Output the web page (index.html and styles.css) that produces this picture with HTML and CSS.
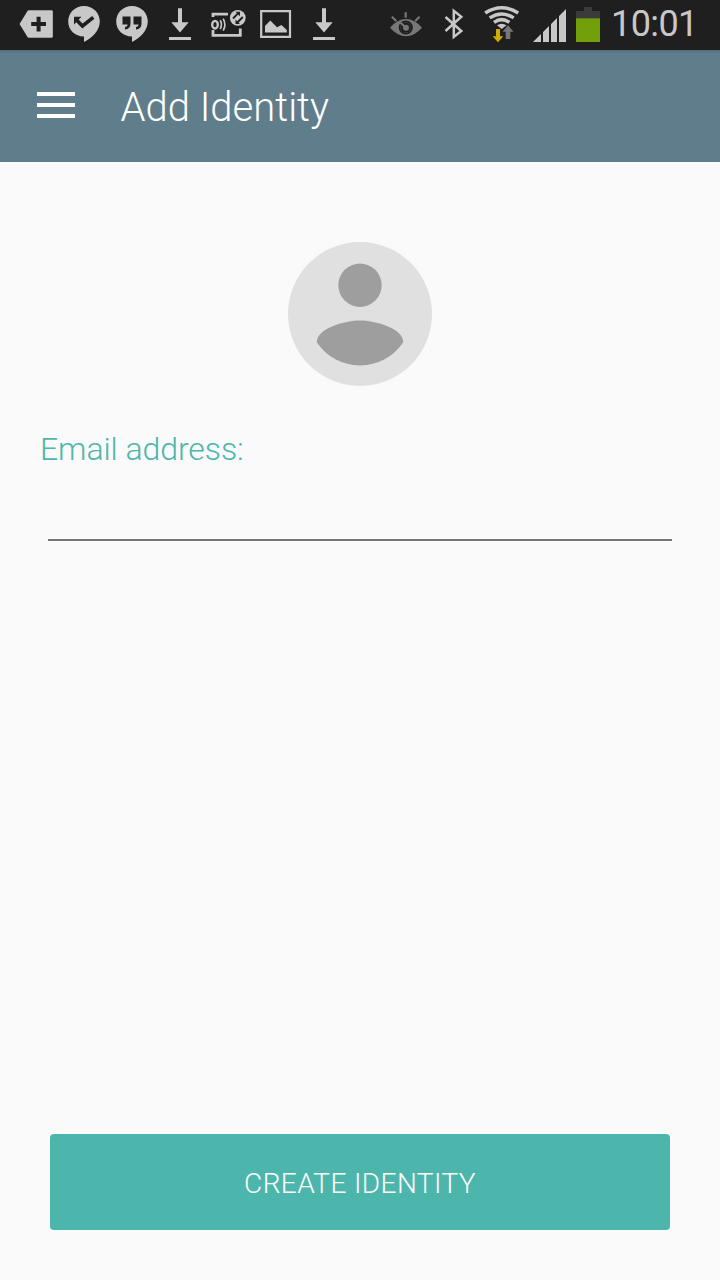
FILE: index.html
```html
<!DOCTYPE html>
<html lang="en">
<head>
<meta charset="utf-8">
<title>Add Identity</title>
<link rel="stylesheet" href="styles.css">
</head>
<body>
<div class="screen">
  <div class="status-bar">
    <div class="notifications">
      <svg class="status-icon" viewBox="12 0 48 50"><path fill="#c8c8c8" d="M19.500 24L27.500 11Q28 10.300 29 10.300H51.500Q52.800 10.300 52.800 11.500V36.500Q52.800 37.700 51.500 37.700H29Q28 37.700 27.500 37z"/><path fill="none" stroke="#1f1f1f" stroke-width="4" d="M31.200 24H46M38.600 16.800V31.600"/></svg>
      <svg class="status-icon" viewBox="60 0 48 50"><path fill="#c8c8c8" d="M84 6C75 6 68.200 13 68.200 21.500C68.200 30 75 36.500 84 36.500V42C92.500 37.500 99.800 30.500 99.800 21.500C99.800 13 93 6 84 6z"/><path fill="none" stroke="#1f1f1f" stroke-width="3.600" d="M76 19.500L82.500 26L93.300 17.300"/><path fill="#1f1f1f" d="M74 16.700H81.500L74 24.500z"/></svg>
      <svg class="status-icon" viewBox="108 0 48 50"><path fill="#c8c8c8" d="M132 6C123 6 116.200 13 116.200 21.500C116.200 30 123 36.500 132 36.500V42C140.500 37.500 147.800 30.500 147.800 21.500C147.800 13 141 6 132 6z"/><path fill="#1f1f1f" d="M122.500 16.500H130.500V23.500Q130.500 29 125 29.500V27Q127.700 26.500 127.700 24.500H122.500zM133.500 16.500H141.500V23.500Q141.500 29 136 29.500V27Q138.700 26.500 138.700 24.500H133.500z"/></svg>
      <svg class="status-icon" viewBox="156 0 48 50"><path fill="#c8c8c8" d="M178 8.300H182V22.300H188.700L180 32.400L171.300 22.300H178zM169 37H191V40H169z"/></svg>
      <svg class="status-icon" viewBox="204 0 48 50"><g fill="none" stroke="#c8c8c8"><path stroke-width="2.800" d="M213 17V14.200H228M213 30V35.400H240.300V28.500"/><ellipse cx="215" cy="24.700" rx="2.800" ry="3.800" stroke-width="2.300"/><path stroke-width="1.700" d="M220.200 20.300Q222.700 24.600 220.200 29M223.200 18.600Q226.500 24.700 223.200 30.700"/></g><circle cx="237.800" cy="17.800" r="7.900" fill="#c8c8c8"/><path fill="none" stroke="#1f1f1f" stroke-width="1.900" d="M233 18.500L238.300 13.200M242.800 17L237.300 22.500"/><path fill="#1f1f1f" d="M235.500 11.700H240V16.200zM235.500 19.500V24H240z"/></svg>
      <svg class="status-icon" viewBox="252 0 48 50"><path fill="none" stroke="#c8c8c8" stroke-width="2.200" d="M261.200 11.100H290V36.800H261.200z"/><path fill="#c8c8c8" d="M265 32.600V26L270.300 20.500L277 27.300L281.500 25L286.800 30V32.600z"/></svg>
      <svg class="status-icon" viewBox="300 0 48 50"><path fill="#c8c8c8" d="M322 8.300H326V22.300H332.700L324 32.400L315.300 22.300H322zM313 37H335V40H313z"/></svg>
    </div>
    <div class="system">
      <svg class="status-icon" viewBox="382 0 48 50"><path fill="none" stroke="#777" stroke-width="2.200" d="M405.700 12.300V17.800M391.800 16.800L396.300 21M419.600 16.800L415.200 21"/><path fill="#777" d="M390 27.700Q397.500 19 406 19Q414.500 19 422 27.700Q414.500 36.200 406 36.200Q397.500 36.200 390 27.700z"/><circle cx="405.800" cy="27.500" r="6.200" fill="#777" stroke="#1f1f1f" stroke-width="1.800"/><circle cx="405.800" cy="27.500" r="5.300" fill="#1f1f1f"/><path fill="none" stroke="#777" stroke-width="2.200" d="M400.500 22.800L405.500 27.300"/><circle cx="406" cy="27.700" r="3" fill="#777"/></svg>
      <svg class="status-icon" viewBox="430 0 48 50"><path fill="none" stroke="#c8c8c8" stroke-width="2.500" d="M445.500 17L461.300 31L453.800 37V10.800L461.300 16.800L445.500 31"/></svg>
      <svg class="status-icon" viewBox="478 0 48 50"><g fill="none" stroke="#c8c8c8" stroke-width="3.500"><path d="M485.200 13Q501.700 2.500 518.200 13"/><path d="M489.700 17.900Q501.700 10 513.700 17.900"/><path d="M494 22.400Q501.700 16.800 509.400 22.400"/></g><path fill="#c8c8c8" d="M497 25.300Q501.700 22.200 506.500 25.300L501.700 29z"/><path fill="#d0ae00" d="M496 29H500V36.300H503.300L498 42.200L492.700 36.300H496z"/><path fill="#777" d="M505.700 39H510.300V31.700H513.500L508 25.200L502.500 31.700H505.700z"/></svg>
      <svg class="signal-icon" viewBox="533 0 34 50"><path fill="#c8c8c8" d="M533 42L541 34V42zM543 42V32L549 26V42zM551 42V24L557 18V42zM559 42V16L566 9V42z"/></svg>
      <svg class="battery-icon" viewBox="576 0 24 50"><path fill="#3b3b3b" d="M584 7H592V11H600V42H576V11H584z"/><path fill="#72a009" d="M576 19H600V42H576z"/><path fill="#5c7923" d="M576 18H600V19H576z"/></svg>
      <span class="clock">10:01</span>
    </div>
  </div>
  <header class="app-bar">
    <svg class="menu-icon" viewBox="0 0 38 26"><path fill="#fff" d="M0 0H38V4H0zM0 11H38V15H0zM0 22H38V26H0z"/></svg>
    <h1 class="title">Add Identity</h1>
  </header>
  <main class="content">
    <svg class="avatar" viewBox="0 0 144 144"><circle cx="72" cy="72" r="72" fill="#e0e0e0"/><circle cx="72" cy="43.200" r="21.700" fill="#9e9e9e"/><path fill="#9e9e9e" d="M28.800 100.200C29 86 57.500 78.600 72 78.600C86.500 78.600 115 86 115.200 100.200A51.800 51.800 0 0 1 28.800 100.200z"/></svg>
    <label class="label" for="email">Email address:</label>
    <input class="email" id="email" type="email">
    <button class="create">CREATE IDENTITY</button>
  </main>
</div>
</body>
</html>
```
FILE: styles.css
```css
body {
  margin: 0;
  background: #fafafa;
  font-family: Roboto, "Noto Sans", sans-serif;
  font-weight: 300;
}
.screen {
  display: flex;
  flex-direction: column;
  width: 720px;
  height: 1280px;
  overflow: hidden;
}
svg {
  display: block;
  flex: none;
}
.status-bar {
  display: flex;
  justify-content: space-between;
  box-sizing: border-box;
  height: 50px;
  padding: 0 24px 0 12px;
  background: #1f1f1f;
}
.notifications,
.system {
  display: flex;
}
.status-icon {
  width: 48px;
  height: 50px;
}
.signal-icon {
  width: 34px;
  height: 50px;
  margin-left: 7px;
}
.battery-icon {
  width: 24px;
  height: 50px;
  margin-left: 9px;
}
.clock {
  width: 85px;
  margin-left: 11px;
  color: #c8c8c8;
  font-size: 36px;
  line-height: 48px;
  font-weight: 400;
  letter-spacing: -0.6px;
  white-space: nowrap;
}
.app-bar {
  display: flex;
  align-items: center;
  box-sizing: border-box;
  height: 112px;
  padding-left: 37px;
  background: linear-gradient(#546d79, #607d8b 3px);
}
.menu-icon {
  width: 38px;
  height: 26px;
  margin-bottom: 2px;
}
.title {
  margin: 3px 0 0 45.500px;
  color: #fff;
  font-size: 40px;
  line-height: 48px;
  font-weight: 300;
}
.content {
  display: flex;
  flex: 1;
  flex-direction: column;
  padding: 80px 40px 50px;
}
.avatar {
  width: 144px;
  height: 144px;
  align-self: center;
}
.label {
  margin-top: 43px;
  color: #4db6ac;
  font-size: 32px;
  line-height: 40px;
  letter-spacing: -0.080px;
}
.email {
  box-sizing: border-box;
  height: 48px;
  margin: 24px 8px 0;
  padding: 0;
  border: 0;
  border-bottom: 2px solid #737476;
  background: transparent;
  color: #212121;
  font: inherit;
  font-size: 32px;
  outline: none;
}
.create {
  height: 96px;
  margin: auto 10px 0;
  padding: 2px 0 0;
  border: 0;
  border-radius: 4px;
  background: #4db6ac;
  color: #fff;
  font: inherit;
  font-size: 28px;
  letter-spacing: 0.400px;
}
```
